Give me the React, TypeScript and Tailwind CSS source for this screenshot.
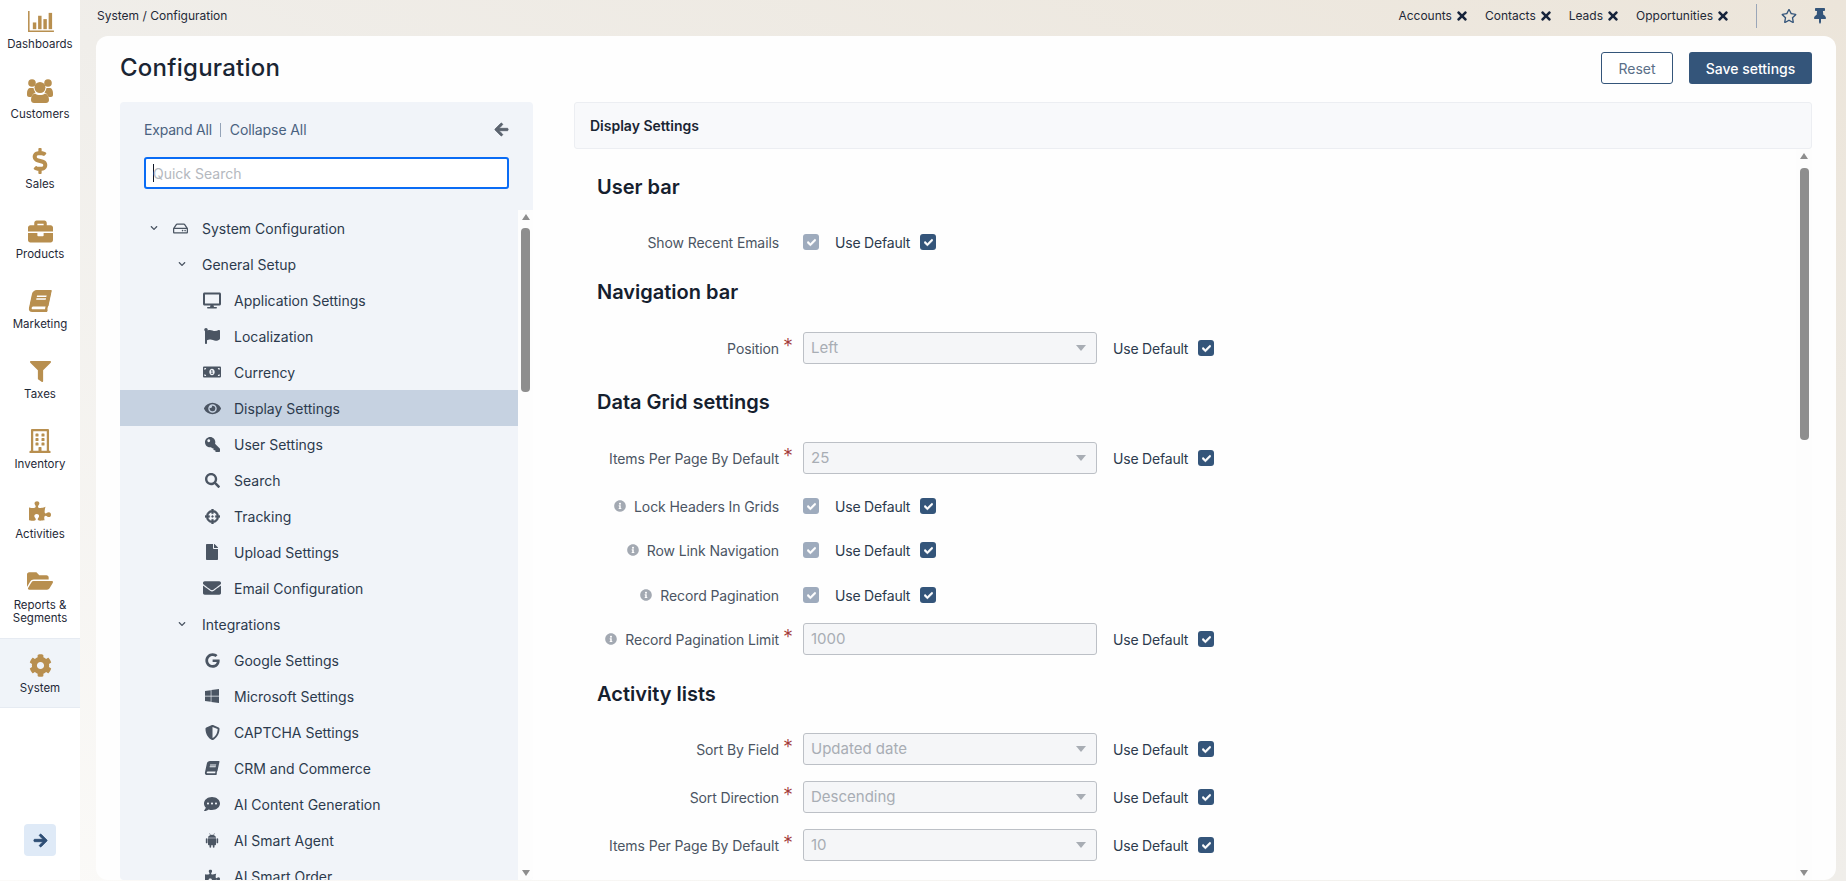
import { ReactNode } from "react";
import { IconType } from "react-icons";
import {
  FaArrowLeft,
  FaArrowRight,
  FaBook,
  FaBriefcase,
  FaCheck,
  FaCog,
  FaCommentDots,
  FaCrosshairs,
  FaDesktop,
  FaDollarSign,
  FaEnvelope,
  FaEye,
  FaFile,
  FaFilter,
  FaFlag,
  FaFolderOpen,
  FaGoogle,
  FaInfoCircle,
  FaKey,
  FaMoneyBillAlt,
  FaPuzzlePiece,
  FaRegBuilding,
  FaRegHdd,
  FaRegStar,
  FaSearch,
  FaShieldAlt,
  FaThumbtack,
  FaTimes,
  FaWindows,
  FaChevronDown,
} from "react-icons/fa";

const FONT = "font-['Inter','Liberation_Sans',sans-serif]";

type AnyIcon = IconType | ((props: { className?: string }) => ReactNode);

function BarsIcon({ className }: { className?: string }) {
  return (
    <svg viewBox="0 0 28 24" className={className} fill="currentColor">
      <path d="M1 1h1.6v20.4H28V23H1z" />
      <rect x="6" y="13" width="3.6" height="7" />
      <rect x="11.5" y="6" width="3.6" height="14" />
      <rect x="17" y="9.5" width="3.6" height="10.5" />
      <rect x="22.5" y="3" width="3.6" height="17" />
    </svg>
  );
}

function UsersIcon({ className }: { className?: string }) {
  return (
    <svg viewBox="0 0 26 24" className={className} fill="currentColor">
      <circle cx="5" cy="4" r="3.8" />
      <circle cx="21" cy="4" r="3.8" />
      <circle cx="13" cy="8.5" r="5.5" />
      <path d="M0 14c0-3 1.5-5 3-5h3.5a8 8 0 0 0 2 4.5c-2.2 1-3.6 2.6-4 4.5H2c-1 0-2-1-2-2z" />
      <path d="M26 14c0-3-1.5-5-3-5h-3.5a8 8 0 0 1-2 4.5c2.2 1 3.6 2.6 4 4.5H24c1 0 2-1 2-2z" />
      <path d="M8 14.5c1.3 1 3 1.5 5 1.5s3.7-.5 5-1.5c2.8.6 4 3.4 4 6.5 0 2-1.4 3-3 3H7c-1.6 0-3-1-3-3 0-3.1 1.2-5.9 4-6.5z" />
    </svg>
  );
}

function AndroidIcon({ className }: { className?: string }) {
  return (
    <svg viewBox="0 0 16 18" className={className} fill="currentColor">
      <path d="M3.2 5.6C3.3 3.6 5.3 2 8 2s4.7 1.6 4.8 3.6z" />
      <path d="M5 .4l1.2 2M11 .4L9.8 2.4" stroke="currentColor" strokeWidth="0.7" />
      <path d="M3.2 6.3h9.6v7.4c0 .6-.4 1-1 1H4.2c-.6 0-1-.4-1-1z" />
      <rect x="0.6" y="6.3" width="2" height="6" rx="1" />
      <rect x="13.4" y="6.3" width="2" height="6" rx="1" />
      <rect x="5" y="13" width="2" height="4.8" rx="1" />
      <rect x="9" y="13" width="2" height="4.8" rx="1" />
    </svg>
  );
}

const navItems: { label: ReactNode; icon: AnyIcon; size: string; active?: boolean; tall?: boolean }[] = [
  { label: "Dashboards", icon: BarsIcon, size: "h-[23px] w-[27px]" },
  { label: "Customers", icon: UsersIcon, size: "h-[24px] w-[26px]" },
  { label: "Sales", icon: FaDollarSign, size: "h-[26px] w-[26px]" },
  { label: "Products", icon: FaBriefcase, size: "h-[25px] w-[25px]" },
  { label: "Marketing", icon: FaBook, size: "h-[22px] w-[20px] -skew-x-12" },
  { label: "Taxes", icon: FaFilter, size: "h-[21px] w-[21px]" },
  { label: "Inventory", icon: FaRegBuilding, size: "h-[24px] w-[24px]" },
  { label: "Activities", icon: FaPuzzlePiece, size: "h-[22px] w-[22px]" },
  { label: <>Reports &amp;<br />Segments</>, icon: FaFolderOpen, size: "h-[26px] w-[26px]", tall: true },
  { label: "System", icon: FaCog, size: "h-[23px] w-[23px]", active: true },
];

function Sidebar() {
  return (
    <aside className="flex h-full w-[80px] shrink-0 flex-col bg-white -mt-px">
      {navItems.map((item, i) => {
        const Icon = item.icon;
        return (
          <div
            key={i}
            className={
              item.active
                ? "flex h-[70px] flex-col items-center border-y border-[#e6ebf2] bg-[#f0f4f9] pt-[14px]"
                : item.tall
                  ? "flex h-[79px] flex-col items-center pt-[10px]"
                  : "flex h-[70px] flex-col items-center pt-[10px]"
            }
          >
            <div className="flex h-[24px] items-center justify-center text-[#b88f4f]">
              <Icon className={item.size} />
            </div>
            <div className={item.tall ? "mt-[6px] text-center text-[11.5px] leading-[13px] text-[#1f2937]" : "mt-[5px] text-center text-[11.5px] leading-[13px] text-[#1f2937]"}>{item.label}</div>
          </div>
        );
      })}
      <div className="mt-auto mb-[24px] flex justify-center">
        <div className="flex h-[32px] w-[32px] items-center justify-center rounded-[4px] bg-[#dfeaf7] text-[#2f4f75]">
          <FaArrowRight className="h-[15px] w-[15px] stroke-[30]" />
        </div>
      </div>
    </aside>
  );
}

function Shortcut({ label }: { label: string }) {
  return (
    <div className="flex items-center gap-[3px] text-[12px] text-[#1f2937]">
      {label}
      <FaTimes className="h-[14px] w-[14px] text-[#16233a]" />
    </div>
  );
}

function TopBar() {
  return (
    <div className="flex h-[36px] items-center justify-between pl-[17px] pr-[18px]">
      <div className="-mt-[4px] text-[12px] text-[#1f2937]">System / Configuration</div>
      <div className="flex items-center -mt-[4px]">
        <div className="flex items-center gap-[16px]">
          <Shortcut label="Accounts" />
          <Shortcut label="Contacts" />
          <Shortcut label="Leads" />
          <Shortcut label="Opportunities" />
        </div>
        <div className="ml-[26px] h-[24px] w-px bg-[#9aa6b8]" />
        <FaRegStar className="ml-[24px] h-[16px] w-[16px] text-[#34557a]" />
        <FaThumbtack className="ml-[15px] h-[16px] w-[16px] text-[#34557a]" />
      </div>
    </div>
  );
}

type TreeRow = { label: string; icon?: IconType | typeof AndroidIcon; level: 0 | 1 | 2; iconClass?: string };

const treeRows: TreeRow[] = [
  { label: "System Configuration", level: 0 },
  { label: "General Setup", level: 1 },
  { label: "Application Settings", icon: FaDesktop, level: 2, iconClass: "h-[17px] w-[18px]" },
  { label: "Localization", icon: FaFlag, level: 2, iconClass: "h-[16px] w-[16px]" },
  { label: "Currency", icon: FaMoneyBillAlt, level: 2, iconClass: "h-[18px] w-[18px]" },
  { label: "Display Settings", icon: FaEye, level: 2, iconClass: "h-[17px] w-[17px]" },
  { label: "User Settings", icon: FaKey, level: 2, iconClass: "h-[15px] w-[15px] -scale-x-100" },
  { label: "Search", icon: FaSearch, level: 2, iconClass: "h-[15px] w-[15px]" },
  { label: "Tracking", icon: FaCrosshairs, level: 2, iconClass: "h-[15px] w-[15px] stroke-[15]" },
  { label: "Upload Settings", icon: FaFile, level: 2, iconClass: "h-[16px] w-[16px]" },
  { label: "Email Configuration", icon: FaEnvelope, level: 2, iconClass: "h-[18px] w-[18px]" },
  { label: "Integrations", level: 1 },
  { label: "Google Settings", icon: FaGoogle, level: 2, iconClass: "h-[15px] w-[15px]" },
  { label: "Microsoft Settings", icon: FaWindows, level: 2, iconClass: "h-[16px] w-[16px]" },
  { label: "CAPTCHA Settings", icon: FaShieldAlt, level: 2, iconClass: "h-[15px] w-[15px]" },
  { label: "CRM and Commerce", icon: FaBook, level: 2, iconClass: "h-[14px] w-[14px] -skew-x-12" },
  { label: "AI Content Generation", icon: FaCommentDots, level: 2, iconClass: "h-[16px] w-[16px]" },
  { label: "AI Smart Agent", icon: AndroidIcon, level: 2, iconClass: "h-[15px] w-[14px]" },
  { label: "AI Smart Order", icon: FaPuzzlePiece, level: 2, iconClass: "h-[15px] w-[15px]" },
];

function TreeItem({ row }: { row: TreeRow }) {
  const selected = row.label === "Display Settings";
  const Icon = row.icon;
  return (
    <div className={selected ? "flex h-[36px] shrink-0 items-center bg-[#c6d2e1] text-[14px] text-[#2c3a4d]" : "flex h-[36px] shrink-0 items-center text-[14px] text-[#2c3a4d]"}>
      {row.level === 0 && (
        <>
          <FaChevronDown className="ml-[30px] h-[8px] w-[8px] text-[#4b5563]" />
          <FaRegHdd className="ml-[15px] h-[15px] w-[15px] text-[#4b5563]" />
          <span className="ml-[14px]">{row.label}</span>
        </>
      )}
      {row.level === 1 && (
        <>
          <FaChevronDown className="ml-[58px] h-[8px] w-[8px] text-[#4b5563]" />
          <span className="ml-[16px]">{row.label}</span>
        </>
      )}
      {row.level === 2 && Icon && (
        <>
          <div className="ml-[83px] flex w-[18px] justify-center text-[#4b5563]">
            <Icon className={row.iconClass} />
          </div>
          <span className="ml-[13px]">{row.label}</span>
        </>
      )}
    </div>
  );
}

function TreePanel() {
  return (
    <div className="flex w-[413px] shrink-0 flex-col overflow-hidden rounded-[4px] bg-[#f1f4f9]">
      <div className="h-[108px] shrink-0 pl-[24px] pr-[24px]">
        <div className="flex h-[55px] items-center justify-between text-[14px] text-[#4a6280]">
          <div className="flex items-center tracking-[-0.2px]">
            <span>Expand All</span>
            <span className="mr-[9px] ml-[8px] h-[14px] w-px bg-[#94a3b8]" />
            <span className="tracking-[-0.1px]">Collapse All</span>
          </div>
          <FaArrowLeft className="h-[15px] w-[15px] stroke-[30] text-[#5c6470]" />
        </div>
        <div className="flex h-[32px] items-center rounded-[3px] border-2 border-[#0a6cf5] bg-white pl-[7px] text-[14px] text-[#b4b8be]">
          <span className="mr-[-1px] h-[18px] w-px bg-[#111827]" />
          Quick Search
        </div>
      </div>
      <div className="flex min-h-0 flex-1">
        <div className="flex min-w-0 flex-1 flex-col overflow-hidden">
          {treeRows.map((row) => (
            <TreeItem key={row.label} row={row} />
          ))}
        </div>
        <Scrollbar track="h-full w-[15px]" thumb="mt-[8px] h-[164px]" />
      </div>
    </div>
  );
}

function Scrollbar({ track, thumb }: { track: string; thumb: string }) {
  return (
    <div className={`flex shrink-0 flex-col items-center bg-[#fdfdfd] ${track}`}>
      <div className="mt-[4px] h-0 w-0 border-x-[4.5px] border-b-[6px] border-x-transparent border-b-[#8e8e8e]" />
      <div className={`w-[9px] rounded-[4px] bg-[#8e8e8e] ${thumb}`} />
      <div className="mt-auto mb-[4px] h-0 w-0 border-x-[4.5px] border-t-[6px] border-x-transparent border-t-[#8e8e8e]" />
    </div>
  );
}

function Check({ disabled }: { disabled?: boolean }) {
  return (
    <div className={disabled ? "flex h-[16px] w-[16px] shrink-0 items-center justify-center rounded-[3px] bg-[#9eabbd] text-white" : "flex h-[16px] w-[16px] shrink-0 items-center justify-center rounded-[3px] bg-[#34557a] text-white"}>
      <FaCheck className="h-[9px] w-[9px] stroke-[30]" />
    </div>
  );
}

function UseDefault() {
  return (
    <div className="flex items-center gap-[10px] text-[14px] tracking-[-0.2px] text-[#2c3a4d]">
      Use Default
      <Check />
    </div>
  );
}

type FormRow = {
  label: string;
  mt: string;
  info?: boolean;
  kind: "check" | "select" | "input";
  value?: string;
};

function Row({ row }: { row: FormRow }) {
  const required = row.kind !== "check";
  return (
    <div className={`flex h-[32px] items-center ${row.mt}`}>
      <div className="flex w-[205px] shrink-0 items-center justify-end gap-[8px] text-[14px] tracking-[-0.1px] text-[#4b5563]">
        {row.info && <FaInfoCircle className="h-[12px] w-[12px] text-[#a3a9b2]" />}
        <span className="whitespace-nowrap">{row.label}</span>
      </div>
      <div className="relative w-[24px] shrink-0">
        {required && <span className="absolute -top-[17px] left-[4px] text-[20px] font-light text-[#a33a3a]">*</span>}
      </div>
      {row.kind === "check" && (
        <div className="flex items-center gap-[16px]">
          <Check disabled />
          <UseDefault />
        </div>
      )}
      {row.kind !== "check" && (
        <>
          <div className="flex h-[32px] w-[294px] items-center justify-between rounded-[3px] border border-[#bcc0c6] bg-[#f5f6f8] pr-[10px] pl-[7px] text-[15px] text-[#a8adb4]">
            <span>{row.value}</span>
            {row.kind === "select" && <div className="h-0 w-0 border-x-[5px] border-t-[6px] border-x-transparent border-t-[#a8adb4]" />}
          </div>
          <div className="ml-[16px]">
            <UseDefault />
          </div>
        </>
      )}
    </div>
  );
}

function Heading({ mt, children }: { mt: string; children: ReactNode }) {
  return <h2 className={`h-[28px] pl-[23px] text-[20px] leading-[28px] font-semibold text-[#15202e] ${mt}`}>{children}</h2>;
}

function SettingsPanel() {
  return (
    <div className="flex min-w-0 flex-1 flex-col">
      <div className="flex h-[47px] shrink-0 items-center rounded-[3px] border border-[#eceef2] bg-[#f8f9fb] pl-[15px] text-[14px] font-semibold text-[#1a2533]">
        Display Settings
      </div>
      <div className="flex min-h-0 flex-1">
        <div className="min-w-0 flex-1 overflow-hidden">
          <Heading mt="mt-[24px]">User bar</Heading>
          <Row row={{ label: "Show Recent Emails", mt: "mt-[25px]", kind: "check" }} />
          <Heading mt="mt-[20px]">Navigation bar</Heading>
          <Row row={{ label: "Position", mt: "mt-[26px]", kind: "select", value: "Left" }} />
          <Heading mt="mt-[24px]">Data Grid settings</Heading>
          <Row row={{ label: "Items Per Page By Default", mt: "mt-[26px]", kind: "select", value: "25" }} />
          <Row row={{ label: "Lock Headers In Grids", mt: "mt-[16px]", kind: "check", info: true }} />
          <Row row={{ label: "Row Link Navigation", mt: "mt-[12px]", kind: "check", info: true }} />
          <Row row={{ label: "Record Pagination", mt: "mt-[13px]", kind: "check", info: true }} />
          <Row row={{ label: "Record Pagination Limit", mt: "mt-[12px]", kind: "input", info: true, value: "1000" }} />
          <Heading mt="mt-[25px]">Activity lists</Heading>
          <Row row={{ label: "Sort By Field", mt: "mt-[25px]", kind: "select", value: "Updated date" }} />
          <Row row={{ label: "Sort Direction", mt: "mt-[16px]", kind: "select", value: "Descending" }} />
          <Row row={{ label: "Items Per Page By Default", mt: "mt-[16px]", kind: "select", value: "10" }} />
        </div>
        <Scrollbar track="h-full w-[16px]" thumb="mt-[9px] h-[272px]" />
      </div>
    </div>
  );
}

export default function App() {
  return (
    <div className={`flex h-[881px] w-[1846px] overflow-hidden bg-linear-to-bl from-[#ece5da] via-[#f0eeea] to-[#fbfaf8] ${FONT}`}>
      <Sidebar />
      <main className="flex min-w-0 flex-1 flex-col">
        <TopBar />
        <div className="mr-[10px] mb-px ml-[16px] flex min-h-0 flex-1 flex-col rounded-[12px] bg-[#fefefe] pr-[24px] pl-[24px]">
          <div className="flex h-[66px] shrink-0 items-start justify-between pt-[16px]">
            <h1 className="text-[24px] leading-[32px] font-medium tracking-[0.25px] text-[#1a2533]">Configuration</h1>
            <div className="flex gap-[16px]">
              <button className="h-[32px] w-[72px] rounded-[3px] border border-[#34557a] bg-white text-[14px] text-[#5a6f88]">Reset</button>
              <button className="h-[32px] w-[123px] rounded-[3px] bg-[#34557a] text-[14px] font-medium text-white">Save settings</button>
            </div>
          </div>
          <div className="flex min-h-0 flex-1 gap-[41px]">
            <TreePanel />
            <SettingsPanel />
          </div>
        </div>
      </main>
    </div>
  );
}
